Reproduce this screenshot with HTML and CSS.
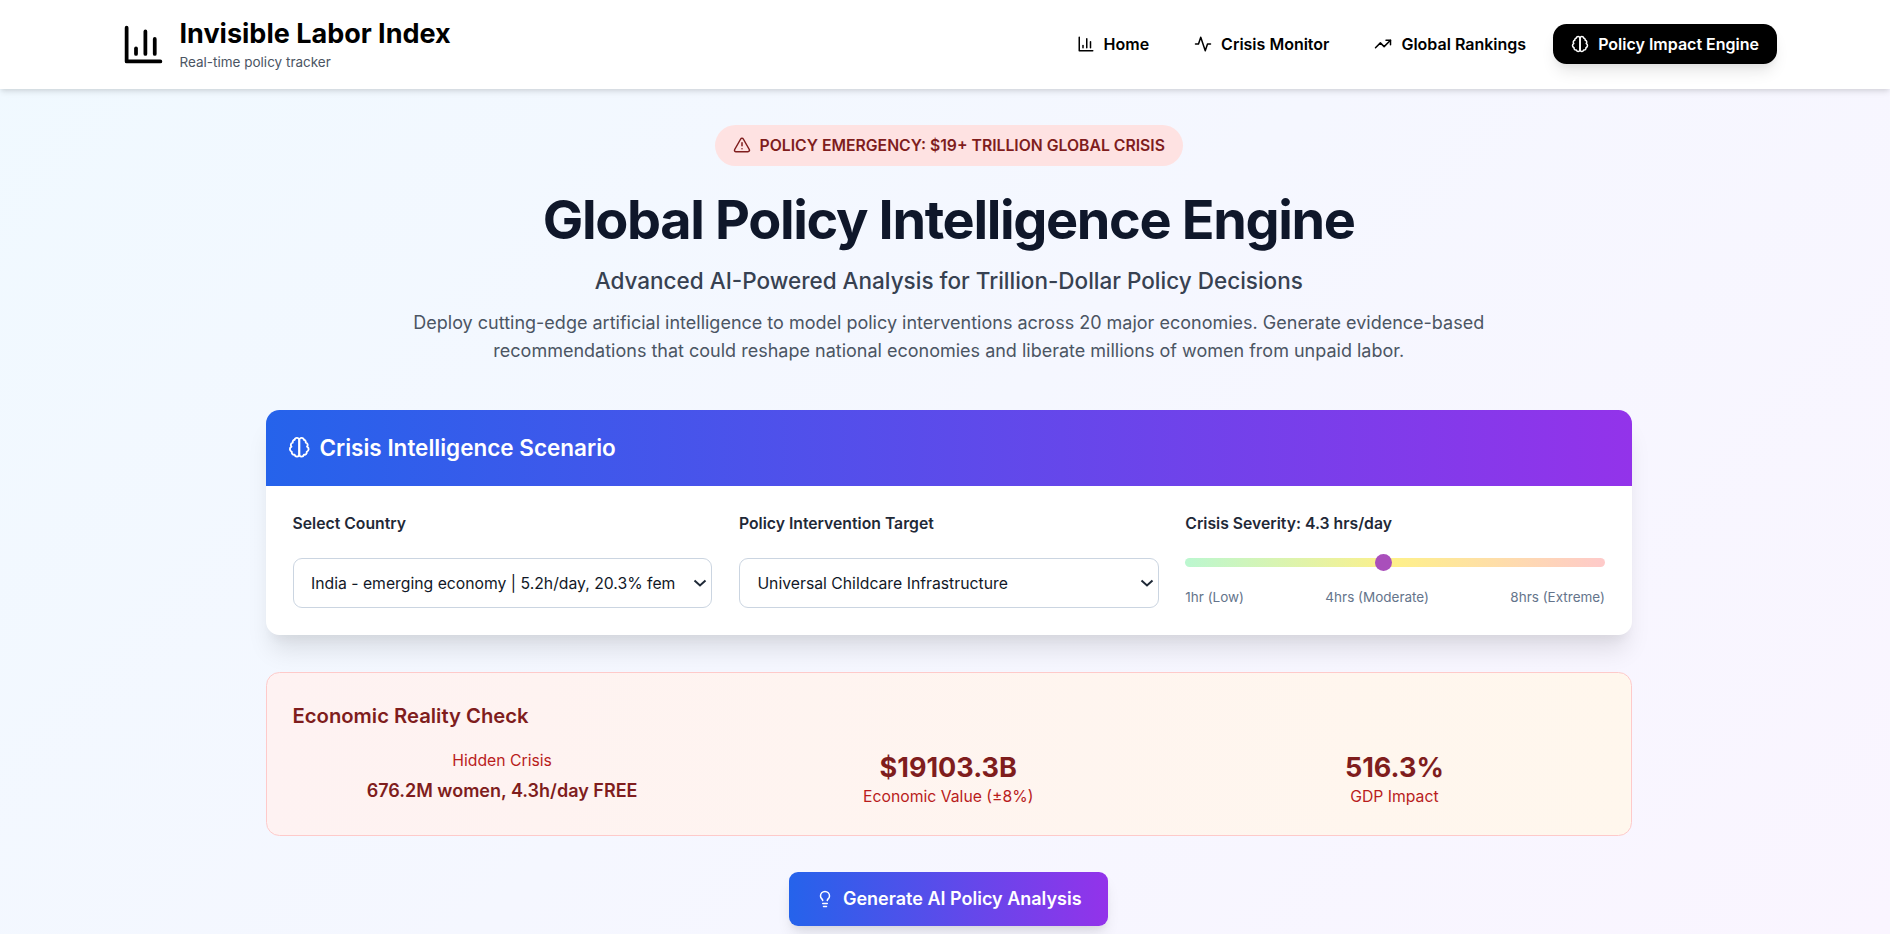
FILE: index.html
```html
<!DOCTYPE html>
<html lang="en">
<head>
<meta charset="utf-8">
<title>Invisible Labor Index</title>
<link rel="stylesheet" href="styles.css">
</head>
<body>
<header class="topbar">
  <div class="brand">
    <svg class="icon logo" viewBox="0 0 24 24"><path d="M3 3v18h18"/><path d="M18 17V9"/><path d="M13 17V5"/><path d="M8 17v-3"/></svg>
    <div class="brand-text">
      <div class="brand-name">Invisible Labor Index</div>
      <div class="brand-sub">Real-time policy tracker</div>
    </div>
  </div>
  <nav class="nav">
    <a class="nav-item"><svg class="icon nav-icon" viewBox="0 0 24 24"><path d="M3 3v18h18"/><path d="M18 17V9"/><path d="M13 17V5"/><path d="M8 17v-3"/></svg>Home</a>
    <a class="nav-item"><svg class="icon nav-icon" viewBox="0 0 24 24"><path d="M22 12h-4l-3 9L9 3l-3 9H2"/></svg>Crisis Monitor</a>
    <a class="nav-item"><svg class="icon nav-icon" viewBox="0 0 24 24"><polyline points="22 7 13.5 15.5 8.5 10.5 2 17"/><polyline points="16 7 22 7 22 13"/></svg>Global Rankings</a>
    <a class="nav-item active"><svg class="icon nav-icon" viewBox="0 0 24 24"><path d="M9.5 2A2.5 2.5 0 0 1 12 4.5v15a2.5 2.5 0 0 1-4.96.44 2.5 2.5 0 0 1-2.96-3.08 3 3 0 0 1-.34-5.58 2.5 2.5 0 0 1 1.32-4.24 2.5 2.5 0 0 1 1.98-3A2.5 2.5 0 0 1 9.5 2Z"/><path d="M14.5 2A2.5 2.5 0 0 0 12 4.5v15a2.5 2.5 0 0 0 4.96.44 2.5 2.5 0 0 0 2.96-3.08 3 3 0 0 0 .34-5.58 2.5 2.5 0 0 0-1.32-4.24 2.5 2.5 0 0 0-1.98-3A2.5 2.5 0 0 0 14.5 2Z"/></svg>Policy Impact Engine</a>
  </nav>
</header>
<main class="main">
  <section class="hero">
    <div class="badge"><svg class="icon badge-icon" viewBox="0 0 24 24"><path d="m21.73 18-8-14a2 2 0 0 0-3.48 0l-8 14A2 2 0 0 0 4 21h16a2 2 0 0 0 1.73-3Z"/><path d="M12 9v4"/><path d="M12 17h.01"/></svg>POLICY EMERGENCY: $19+ TRILLION GLOBAL CRISIS</div>
    <h1 class="title">Global Policy Intelligence Engine</h1>
    <h2 class="subtitle">Advanced AI-Powered Analysis for Trillion-Dollar Policy Decisions</h2>
    <p class="lead">Deploy cutting-edge artificial intelligence to model policy interventions across 20 major economies. Generate evidence-based recommendations that could reshape national economies and liberate millions of women from unpaid labor.</p>
  </section>
  <section class="card">
    <div class="card-head">
      <svg class="icon head-icon" viewBox="0 0 24 24"><path d="M9.5 2A2.5 2.5 0 0 1 12 4.5v15a2.5 2.5 0 0 1-4.96.44 2.5 2.5 0 0 1-2.96-3.08 3 3 0 0 1-.34-5.58 2.5 2.5 0 0 1 1.32-4.24 2.5 2.5 0 0 1 1.98-3A2.5 2.5 0 0 1 9.5 2Z"/><path d="M14.5 2A2.5 2.5 0 0 0 12 4.5v15a2.5 2.5 0 0 0 4.96.44 2.5 2.5 0 0 0 2.96-3.08 3 3 0 0 0 .34-5.58 2.5 2.5 0 0 0-1.32-4.24 2.5 2.5 0 0 0-1.98-3A2.5 2.5 0 0 0 14.5 2Z"/></svg>
      <span>Crisis Intelligence Scenario</span>
    </div>
    <div class="card-body">
      <div class="field">
        <label class="field-label">Select Country</label>
        <div class="select-wrap">
          <select class="select"><option>India - emerging economy | 5.2h/day, 20.3% female LFP</option></select>
          <svg class="chevron" viewBox="0 0 14 8"><path d="M1.5 1.5 7 6.5l5.5-5"/></svg>
        </div>
      </div>
      <div class="field">
        <label class="field-label">Policy Intervention Target</label>
        <div class="select-wrap">
          <select class="select"><option>Universal Childcare Infrastructure</option></select>
          <svg class="chevron" viewBox="0 0 14 8"><path d="M1.5 1.5 7 6.5l5.5-5"/></svg>
        </div>
      </div>
      <div class="field">
        <label class="field-label">Crisis Severity: 4.3 hrs/day</label>
        <input class="slider" type="range" min="1" max="8" step="0.1" value="4.3">
        <div class="scale"><span>1hr (Low)</span><span>4hrs (Moderate)</span><span>8hrs (Extreme)</span></div>
      </div>
    </div>
  </section>
  <section class="reality">
    <h3 class="reality-title">Economic Reality Check</h3>
    <div class="reality-grid">
      <div class="stat">
        <div class="stat-label">Hidden Crisis</div>
        <div class="stat-text">676.2M women, 4.3h/day FREE</div>
      </div>
      <div class="stat">
        <div class="stat-value">$19103.3B</div>
        <div class="stat-label">Economic Value (±8%)</div>
      </div>
      <div class="stat">
        <div class="stat-value">516.3%</div>
        <div class="stat-label">GDP Impact</div>
      </div>
    </div>
  </section>
  <div class="actions">
    <button class="cta"><svg class="icon cta-icon" viewBox="0 0 24 24"><path d="M15 14c.2-1 .7-1.7 1.5-2.5 1-.9 1.5-2.2 1.5-3.5A6 6 0 0 0 6 8c0 1 .2 2.2 1.5 3.5.7.7 1.3 1.5 1.5 2.5"/><path d="M9 18h6"/><path d="M10 22h4"/></svg>Generate AI Policy Analysis</button>
  </div>
</main>
</body>
</html>
```
FILE: styles.css
```css
* { box-sizing: border-box; }
html, body { margin: 0; padding: 0; }
body {
  min-height: 934px;
  font-family: Inter, "Liberation Sans", sans-serif;
  background: linear-gradient(135deg, #f0f9ff 0%, #faf5ff 100%);
  color: #111827;
  overflow: hidden;
}
.icon { fill: none; stroke: currentColor; stroke-width: 2; stroke-linecap: round; stroke-linejoin: round; flex: none; }
.topbar {
  height: 89px;
  background: #fff;
  display: flex;
  align-items: center;
  justify-content: space-between;
  padding: 0 113px 1px 121px;
  box-shadow: 0 4px 6px -1px rgba(0,0,0,.1), 0 2px 4px -1px rgba(0,0,0,.06);
  position: relative;
}
.brand { display: flex; align-items: center; gap: 13.5px; color: #000; }
.logo { width: 45px; height: 45px; }
.brand-name { font-size: 27px; font-weight: 700; line-height: 36px; color: #000; }
.brand-sub { font-size: 13.5px; line-height: 20px; color: #4b5563; }
.nav { display: flex; align-items: center; gap: 9px; }
.nav-item {
  display: flex; align-items: center; gap: 9px;
  height: 40px; padding: 0 18px;
  font-size: 16px; font-weight: 600; color: #000;
  border-radius: 13.5px;
}
.nav-icon { width: 18px; height: 18px; }
.nav-item.active { background: #000; color: #fff; box-shadow: 0 10px 15px -3px rgba(0,0,0,.1), 0 4px 6px -2px rgba(0,0,0,.05); }
.main { width: 1366.5px; margin-left: 265.5px; }
.hero { display: flex; flex-direction: column; align-items: center; text-align: center; padding-top: 36px; }
.badge {
  display: flex; align-items: center; gap: 9px;
  height: 40.5px; padding: 0 18px;
  border-radius: 21px;
  background: #fee2e2; color: #7f1d1d;
  font-size: 15.75px; font-weight: 600;
}
.badge-icon { width: 18px; height: 18px; }
.title { margin: 27px 0 0; font-size: 54px; line-height: 54px; font-weight: 700; letter-spacing: -0.025em; color: #0f172a; }
.subtitle { margin: 18px 0 0; font-size: 22.5px; line-height: 31.5px; font-weight: 500; color: #374151; }
.lead { margin: 12.5px 0 0; width: 1120px; font-size: 18px; line-height: 28px; color: #4b5563; }
.card {
  margin-top: 45px;
  height: 225px;
  background: #fff;
  border-radius: 13.5px;
  overflow: hidden;
  box-shadow: 0 20px 25px -5px rgba(0,0,0,.1), 0 10px 10px -5px rgba(0,0,0,.04);
}
.card-head {
  height: 76px;
  display: flex; align-items: center; gap: 9px;
  padding: 0 22.5px;
  background: linear-gradient(90deg, #2563eb, #9333ea);
  color: #fff;
  font-size: 22.5px; font-weight: 600;
}
.head-icon { width: 22.5px; height: 22.5px; }
.card-body { display: grid; grid-template-columns: repeat(3, 1fr); gap: 26.7px; padding: 27px; }
.field { display: flex; flex-direction: column; }
.field-label { font-size: 15.75px; font-weight: 600; line-height: 22.5px; color: #1f2937; margin-bottom: 22.5px; }
.select-wrap { position: relative; }
.select {
  display: block;
  height: 50px; width: 100%;
  padding: 1px 36px 0 17.5px;
  -webkit-appearance: none; appearance: none;
  border: 1px solid #cbd5e1; border-radius: 9px;
  background: #fff; color: #111827;
  font: 400 15.75px Inter, "Liberation Sans", sans-serif;
}
.chevron {
  position: absolute; right: 5px; top: 21px;
  width: 14px; height: 8px;
  fill: none; stroke: #1f2937; stroke-width: 2; pointer-events: none;
}
.slider {
  -webkit-appearance: none; appearance: none;
  display: block; width: 100%; height: 9px; margin: 0;
  border-radius: 5px;
  background: linear-gradient(90deg, #bbf7d0, #fef08a, #fecaca);
}
.slider::-webkit-slider-thumb {
  -webkit-appearance: none; appearance: none;
  width: 17px; height: 17px; border-radius: 50%;
  background: #a94fbb; border: 0;
}
.scale { display: flex; justify-content: space-between; margin-top: 21px; font-size: 13.5px; line-height: 18px; color: #64748b; }
.reality {
  margin-top: 37px;
  height: 164px;
  padding: 27px 27px 0 26px;
  border: 1px solid #fecaca; border-radius: 13.5px;
  background: linear-gradient(90deg, #fef2f2, #fff7ed);
}
.reality-title { margin: 0; font-size: 20.25px; line-height: 31.5px; font-weight: 600; color: #7f1d1d; }
.reality-grid { display: grid; grid-template-columns: repeat(3, 1fr); gap: 27px; margin-top: 19px; text-align: center; }
.stat-label { font-size: 15.75px; line-height: 22.5px; color: #b91c1c; }
.stat-text { font-size: 18px; font-weight: 600; line-height: 27px; margin-top: 4px; color: #7f1d1d; }
.stat-value { font-size: 27px; font-weight: 700; line-height: 36px; color: #7f1d1d; }
.actions { display: flex; justify-content: center; margin-top: 36px; }
.cta {
  display: flex; align-items: center; gap: 9px;
  width: 319px; height: 54px; justify-content: center;
  border: 0; border-radius: 9px;
  background: linear-gradient(90deg, #2563eb, #9333ea);
  color: #fff;
  font: 600 18px Inter, "Liberation Sans", sans-serif;
  box-shadow: 0 10px 15px -3px rgba(0,0,0,.1), 0 4px 6px -2px rgba(0,0,0,.05);
}
.cta-icon { width: 18px; height: 18px; }
```
